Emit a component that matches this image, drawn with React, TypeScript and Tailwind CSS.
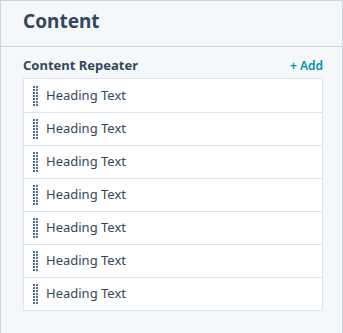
import { Fragment } from 'react';

const rows = Array.from({ length: 7 }, () => 'Heading Text');

function Grip() {
    return (
        <div className="grid grid-cols-2 gap-x-[1px] gap-y-[1px] w-[5px]">
            {Array.from({ length: 14 }, (_, i) => (
                <span key={i} className="block w-[2px] h-[2px] bg-[#516f90]" />
            ))}
        </div>
    );
}

export default function App() {
    return (
        <div className="w-[343px] h-[333px] bg-[#f5f8fa] border-t border-x border-[#cbd6e2] font-['Noto_Sans',sans-serif] text-[#33475b]">
            <div className="h-[46px] border-b border-[#cbd6e2] px-[22px] flex items-center">
                <h2 className="text-[19px] font-bold leading-none -mt-[4px]">Content</h2>
            </div>
            <div className="pl-[22px] pr-[19px] pt-[10px]">
                <div className="flex items-center justify-between h-[18px] mb-[3px]">
                    <span className="text-[13px] font-bold">Content Repeater</span>
                    <button className="text-[12px] font-semibold text-[#0091ae]">+ Add</button>
                </div>
                <div className="bg-white border border-[#dfe3eb]">
                    {rows.map((label, i) => (
                        <Fragment key={i}>
                            <div
                                className={`h-[33px] flex items-center pl-[9px] gap-[8px] ${i > 0 ? 'border-t border-[#dfe3eb]' : ''}`}
                            >
                                <Grip />
                                <span className="text-[13px]">{label}</span>
                            </div>
                        </Fragment>
                    ))}
                </div>
            </div>
        </div>
    );
}
